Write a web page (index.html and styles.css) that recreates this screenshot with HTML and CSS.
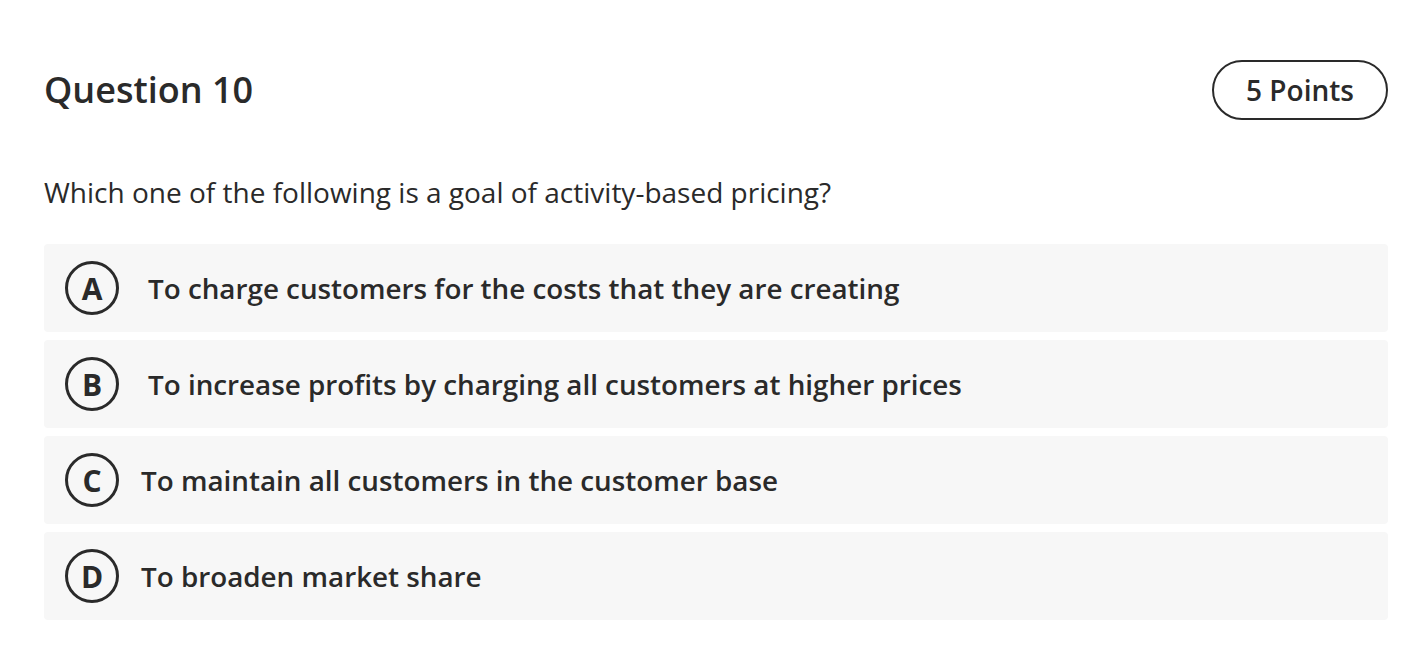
FILE: index.html
```html
<!DOCTYPE html>
<html>
<head>
<meta charset="utf-8">
<link rel="stylesheet" href="styles.css">
</head>
<body>
<div class="page">
  <div class="header">
    <h1 class="title">Question 10</h1>
    <div class="points">5 Points</div>
  </div>
  <p class="prompt">Which one of the following is a goal of activity-based pricing?</p>
  <div class="options">
    <div class="option"><span class="letter">A</span><span class="label">To charge customers for the costs that they are creating</span></div>
    <div class="option"><span class="letter">B</span><span class="label">To increase profits by charging all customers at higher prices</span></div>
    <div class="option option--tight"><span class="letter">C</span><span class="label">To maintain all customers in the customer base</span></div>
    <div class="option option--tight"><span class="letter">D</span><span class="label">To broaden market share</span></div>
  </div>
</div>
</body>
</html>
```
FILE: styles.css
```css
html, body {
  margin: 0;
  padding: 0;
  background: #ffffff;
}
body {
  font-family: "Open Sans", "Noto Sans", sans-serif;
  color: #2a2a2a;
}
.page {
  padding: 60px 34px 0 44px;
}
.header {
  display: flex;
  justify-content: space-between;
  align-items: center;
  height: 60px;
}
.title {
  margin: 0;
  font-size: 36px;
  font-weight: 600;
  line-height: 60px;
  color: #2a2a2a;
}
.points {
  box-sizing: border-box;
  height: 60px;
  width: 176px;
  border: 2px solid #2a2a2a;
  border-radius: 30px;
  display: flex;
  align-items: center;
  justify-content: center;
  font-size: 28px;
  font-weight: 600;
}
.prompt {
  margin: 52px 0 0 0;
  font-size: 28px;
  line-height: 40px;
  font-weight: 400;
}
.options {
  margin-top: 32px;
  display: flex;
  flex-direction: column;
  gap: 8px;
}
.option {
  height: 88px;
  background: #f7f7f7;
  border-radius: 4px;
  display: flex;
  align-items: center;
  padding-left: 21px;
}
.letter {
  box-sizing: border-box;
  width: 54px;
  height: 54px;
  border: 3px solid #2a2a2a;
  border-radius: 50%;
  display: flex;
  align-items: center;
  justify-content: center;
  font-size: 30px;
  font-weight: 700;
  flex-shrink: 0;
}
.label {
  margin-left: 29px;
  font-size: 27.8px;
  font-weight: 600;
}
.option--tight .label {
  margin-left: 22px;
}
```
